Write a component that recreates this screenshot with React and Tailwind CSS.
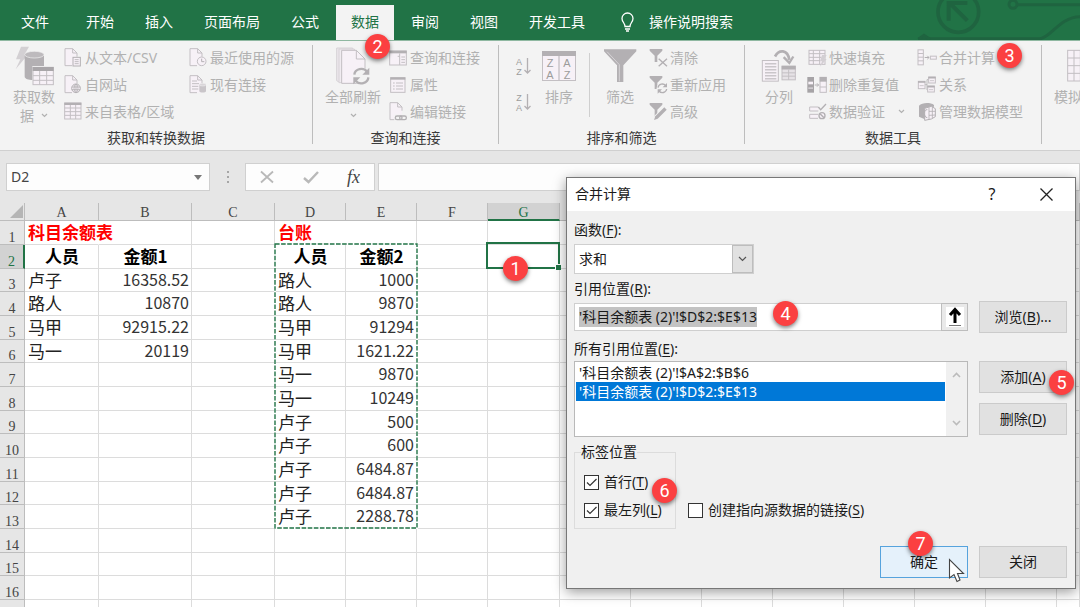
import { useEffect, useRef } from "react";

const UI_FONT = "font-['Noto_Sans','Noto_Sans_CJK_SC',sans-serif]";
const CELL_FONT = "font-['Noto_Sans_CJK_SC',sans-serif]";
const SERIF_FONT = "font-['Liberation_Serif',serif]";

const INK = "#b3b0b3";
const EDGE = "#c3bfc3";
const PAPER = "#f7f1f7";

/* ---------- icons ---------- */

function GetDataIcon() {
  return (
    <svg width="39" height="40" viewBox="45 140 117 120" aria-hidden="true">
      <path d="M63 142H87L75 163H86L47 210L61 180H48Z" fill="#d3d0d3" />
      <path d="M74 166V232C74 238 86 242 98 242H132V166Z" fill={INK} />
      <ellipse cx="103" cy="166" rx="29" ry="10" fill="#bdbabd" stroke="#f3f3f3" strokeWidth="2" />
      <rect x="97" y="200" width="65" height="60" fill="#f3f3f3" />
      <rect x="99" y="204" width="61" height="52" fill={PAPER} stroke={EDGE} strokeWidth="3" />
      <rect x="98" y="203" width="63" height="12" fill="#a9a6a9" />
      <path d="M119 215V256M140 215V256M99 229H160M99 243H160" stroke={EDGE} strokeWidth="3" />
    </svg>
  );
}

function DocIcon({ children }) {
  return (
    <svg width="18" height="19" viewBox="0 0 54 57" aria-hidden="true">
      <path d="M3 2H26L39 15V53H3Z" fill={PAPER} />
      <path d="M24 53H3V2H26L39 15V26M26 2V15H39" fill="none" stroke={EDGE} strokeWidth="3" />
      {children}
    </svg>
  );
}

function TextFileIcon() {
  return (
    <DocIcon>
      <rect x="27" y="28" width="22" height="26" fill={PAPER} stroke={INK} strokeWidth="3" />
      <path d="M32 35H44M32 41H44M32 47H44" stroke={INK} strokeWidth="2.5" />
    </DocIcon>
  );
}

function WebIcon() {
  return (
    <DocIcon>
      <circle cx="36" cy="40" r="13" fill={PAPER} stroke={INK} strokeWidth="3" />
      <ellipse cx="36" cy="40" rx="6" ry="12" fill="none" stroke={INK} strokeWidth="2.5" />
      <path d="M24 36H48M24 44H48M36 28V52" stroke={INK} strokeWidth="2.5" />
    </DocIcon>
  );
}

function TableIcon() {
  return (
    <svg width="18" height="19" viewBox="0 0 54 57" aria-hidden="true">
      <rect x="2" y="3" width="49" height="48" fill={PAPER} stroke={EDGE} strokeWidth="3" />
      <rect x="1" y="2" width="51" height="7" fill={INK} />
      <path d="M19 9V51M35 9V51M2 18H51M2 29H51M2 40H51" stroke={EDGE} strokeWidth="3" />
    </svg>
  );
}

function RecentIcon() {
  return (
    <DocIcon>
      <circle cx="38" cy="40" r="13" fill={PAPER} stroke={EDGE} strokeWidth="3" />
      <path d="M38 32V41H46" fill="none" stroke={INK} strokeWidth="3" />
    </DocIcon>
  );
}

function ConnectionsIcon() {
  return (
    <DocIcon>
      <path d="M9 18H24M9 26H30M9 34H28M9 42H28" stroke={EDGE} strokeWidth="3" />
      <path d="M31 29V49C31 54 51 54 51 49V29Z" fill="#c9c5c9" />
      <ellipse cx="41" cy="29" rx="10" ry="4" fill="#d9d5d9" stroke="#f3f3f3" strokeWidth="1.5" />
    </DocIcon>
  );
}

function RefreshAllIcon() {
  return (
    <svg width="36" height="40" viewBox="52 140 108 120" aria-hidden="true">
      <path d="M57 146H105V240L64 248L57 244Z" fill="#ebe6eb" stroke="#d6d2d6" strokeWidth="3" />
      <path d="M64 149H110L120 250H64Z" fill="#f0ebf0" stroke="#d6d2d6" strokeWidth="3" />
      <path d="M72 153H116L142 179V252H72Z" fill={PAPER} stroke={EDGE} strokeWidth="3" />
      <path d="M116 153V179H142" fill="none" stroke={EDGE} strokeWidth="3" />
      <circle cx="131" cy="230" r="26" fill="#f3f3f3" />
      <path d="M110 226A21 19 0 0 1 148 217M152 234A21 19 0 0 1 114 244" fill="none" stroke={INK} strokeWidth="7" />
      <path d="M155 205V226H134Z" fill={INK} />
      <path d="M107 255V234H128Z" fill={INK} />
    </svg>
  );
}

function QueriesIcon() {
  return (
    <svg width="18" height="18" viewBox="0 0 54 54" aria-hidden="true">
      <rect x="2" y="6" width="50" height="42" fill={PAPER} stroke={EDGE} strokeWidth="3" />
      <rect x="1" y="5" width="52" height="8" fill={INK} />
      <path d="M32 13V48M32 22H26M37 24H48M37 32H48M37 40H48" stroke={EDGE} strokeWidth="3" />
    </svg>
  );
}

function PropertiesIcon() {
  return (
    <svg width="18" height="18" viewBox="0 0 54 54" aria-hidden="true">
      <rect x="5" y="5" width="43" height="44" fill={PAPER} stroke={EDGE} strokeWidth="3" />
      <rect x="4" y="4" width="45" height="7" fill={INK} />
      <path d="M12 21H17M21 21H42M12 30H17M21 30H42M12 39H17M21 39H42" stroke={EDGE} strokeWidth="3" />
    </svg>
  );
}

function EditLinksIcon() {
  return (
    <DocIcon>
      <rect x="16" y="38" width="38" height="19" fill="#f3f3f3" />
      <rect x="19" y="42" width="20" height="11" rx="5" fill="none" stroke={INK} strokeWidth="4" />
      <rect x="32" y="42" width="20" height="11" rx="5" fill="none" stroke={INK} strokeWidth="4" />
    </DocIcon>
  );
}

function SortArrowIcon({ first, second }) {
  const letter = { textAnchor: "middle", fontSize: "9", fill: "#9c9c9c", fontFamily: "Liberation Sans, sans-serif" };
  return (
    <svg width="17" height="22" viewBox="0 0 17 22" aria-hidden="true">
      <text x="5" y="9" {...letter}>{first}</text>
      <text x="5" y="19" {...letter}>{second}</text>
      <path d="M13.5 2V17M10.5 14L13.5 17L16.5 14" fill="none" stroke={INK} strokeWidth="1.3" />
    </svg>
  );
}

function SortIcon() {
  const letter = { textAnchor: "middle", fontSize: "11", fill: "#9c9c9c", fontFamily: "Liberation Sans, sans-serif" };
  return (
    <svg width="34" height="32" viewBox="0 0 34 32" aria-hidden="true">
      <rect x="0.5" y="1.5" width="33" height="29" fill={PAPER} stroke={EDGE} />
      <rect x="0" y="1" width="34" height="5" fill={INK} />
      <path d="M17 6V30" stroke={EDGE} strokeWidth="1.3" />
      <text x="8" y="17" {...letter}>Z</text>
      <text x="8" y="29" {...letter}>A</text>
      <text x="25" y="17" {...letter}>A</text>
      <text x="25" y="29" {...letter}>Z</text>
    </svg>
  );
}

function FilterIcon() {
  return (
    <svg width="34" height="36" viewBox="848 147 102 108" aria-hidden="true">
      <path d="M851 151H948V157L909 199V249H890V199L851 157Z" fill={INK} />
      <path d="M860 158L897 197V247" fill="none" stroke="#d5d2d5" strokeWidth="3" />
    </svg>
  );
}

function SmallFunnel({ children }) {
  return (
    <svg width="19" height="19" viewBox="0 0 57 57" aria-hidden="true">
      <path d="M2 3H40V8L25 23V42H17V23L2 8Z" fill={INK} />
      {children}
    </svg>
  );
}

function ClearIcon() {
  return (
    <SmallFunnel>
      <path d="M29 32L54 55M54 32L29 55" stroke="#f3f3f3" strokeWidth="10" />
      <path d="M29 32L54 55M54 32L29 55" stroke={INK} strokeWidth="4" />
    </SmallFunnel>
  );
}

function ReapplyIcon() {
  return (
    <SmallFunnel>
      <circle cx="40" cy="40" r="17" fill="#f3f3f3" />
      <path d="M27 38A13 13 0 0 1 50 32M53 42A13 13 0 0 1 30 48" fill="none" stroke={INK} strokeWidth="4" />
      <path d="M54 24V37H41ZM26 56V43H39Z" fill={INK} />
    </SmallFunnel>
  );
}

function AdvancedIcon() {
  return (
    <SmallFunnel>
      <path d="M14 54L54 14" stroke="#f3f3f3" strokeWidth="14" />
      <path d="M15 54L19 43L46 16L53 23L26 50Z" fill={INK} />
    </SmallFunnel>
  );
}

function SplitIcon() {
  return (
    <svg width="36" height="36" viewBox="184 146 108 105" aria-hidden="true">
      <path d="M226 170C238 148 264 148 269 180" fill="none" stroke={INK} strokeWidth="8" />
      <path d="M252 172L269 189L281 170" fill="none" stroke={INK} strokeWidth="7" />
      <rect x="188" y="182" width="48" height="62" fill={PAPER} stroke={EDGE} strokeWidth="3" />
      <path d="M196 192H230M196 201H230M196 210H230M196 219H230M196 228H230M196 237H230" stroke={INK} strokeWidth="3" />
      <rect x="247" y="199" width="40" height="41" fill="#e6e2e6" stroke={EDGE} strokeWidth="3" />
      <rect x="246" y="198" width="42" height="11" fill={INK} />
      <path d="M267 209V240M247 219H287M247 229H287" stroke={EDGE} strokeWidth="3" />
    </svg>
  );
}

function FlashFillIcon() {
  return (
    <svg width="19" height="18" viewBox="0 0 57 54" aria-hidden="true">
      <rect x="3" y="4" width="48" height="42" fill={PAPER} stroke={EDGE} strokeWidth="3" />
      <path d="M3 14H51M3 25H40M3 35H36M16 4V46M35 4V46" stroke={EDGE} strokeWidth="3" />
      <path d="M42 18H56L49 30H56L36 53L42 37H36Z" fill="#d3cfd3" />
    </svg>
  );
}

function DedupeIcon() {
  return (
    <svg width="20" height="18" viewBox="0 0 60 54" aria-hidden="true">
      <rect x="1" y="3" width="20" height="47" fill="#a6a3a6" />
      <rect x="4" y="17" width="14" height="8" fill={PAPER} />
      <rect x="4" y="34" width="14" height="5" fill="#d0ccd0" />
      <path d="M23 27H34M30 22L35 27L30 32" fill="none" stroke={INK} strokeWidth="3" />
      <rect x="39" y="4" width="19" height="45" fill={PAPER} stroke={EDGE} strokeWidth="3" />
      <rect x="38" y="3" width="21" height="14" fill={INK} />
      <path d="M38 33H58" stroke={EDGE} strokeWidth="3" />
    </svg>
  );
}

function ValidationIcon() {
  return (
    <svg width="19" height="18" viewBox="0 0 57 54" aria-hidden="true">
      <path d="M30 12H5V24H31M30 34H5V46H30" fill={PAPER} stroke={EDGE} strokeWidth="3" />
      <path d="M31 12L38 20L54 3" fill="none" stroke={INK} strokeWidth="4" />
      <circle cx="42" cy="38" r="9" fill={PAPER} stroke={INK} strokeWidth="4" />
      <path d="M36 32L48 44" stroke={INK} strokeWidth="4" />
    </svg>
  );
}

function ConsolidateIcon() {
  return (
    <svg width="20" height="17" viewBox="0 0 60 50" aria-hidden="true">
      <rect x="3" y="2" width="16" height="45" fill={PAPER} stroke={EDGE} strokeWidth="3" />
      <path d="M3 13H19M3 24H19M3 35H19" stroke={EDGE} strokeWidth="3" />
      <path d="M23 25H36M31 20L36 25L31 30" fill="none" stroke={INK} strokeWidth="3" />
      <rect x="40" y="21" width="18" height="9" fill={PAPER} stroke={EDGE} strokeWidth="3" />
    </svg>
  );
}

function RelationsIcon() {
  return (
    <svg width="20" height="18" viewBox="0 0 60 54" aria-hidden="true">
      <path d="M24 26H30V11H34M30 26V42H34" fill="none" stroke={INK} strokeWidth="2.5" />
      <rect x="4" y="16" width="20" height="22" fill={PAPER} stroke={EDGE} strokeWidth="3" />
      <rect x="35" y="3" width="20" height="18" fill={PAPER} stroke={EDGE} strokeWidth="3" />
      <rect x="32" y="30" width="20" height="18" fill={PAPER} stroke={EDGE} strokeWidth="3" />
      <path d="M3 18H25M34 5H56M31 32H53" stroke={INK} strokeWidth="5" />
      <path d="M8 29H20M36 41H48M39 14H51" stroke={EDGE} strokeWidth="2.5" />
    </svg>
  );
}

function DataModelIcon() {
  return (
    <svg width="19" height="19" viewBox="0 0 57 57" aria-hidden="true">
      <path d="M3 11C12 1 38 1 48 9V14L24 18V53L3 44Z" fill={INK} />
      <path d="M20 19L40 13L52 20V44L40 51L20 55Z" fill={PAPER} stroke={INK} strokeWidth="3" />
      <path d="M33 16V53M43 15V49M33 28L52 28M33 40L52 39" stroke={INK} strokeWidth="2.5" />
      <path d="M28 23C19 22 22 30 16 34C22 37 19 47 28 47" fill="none" stroke={INK} strokeWidth="3" />
    </svg>
  );
}

function WhatIfIcon() {
  return (
    <svg width="30" height="34" viewBox="0 0 90 102" aria-hidden="true">
      <rect x="2" y="4" width="78" height="92" fill={PAPER} stroke={EDGE} strokeWidth="3" />
      <path d="M21 4V96M40 4V96M60 4V96M2 27H80M2 50H80M2 73H80" stroke={EDGE} strokeWidth="3" />
    </svg>
  );
}

function Chevron({ className = "" }) {
  return (
    <svg className={className} width="7" height="5" viewBox="0 0 7 5" aria-hidden="true">
      <path d="M1 1L3.5 3.5L6 1" fill="none" stroke="currentColor" strokeWidth="1.2" />
    </svg>
  );
}

/* ---------- title tabs ---------- */

const TABS = ["开始", "插入", "页面布局", "公式", "数据", "审阅", "视图", "开发工具"];

function TabBar() {
  return (
    <header className="relative flex h-[41px] shrink-0 items-end overflow-hidden border-b border-[#8fb8a1] bg-[#217346] text-sm text-white">
      <svg className="absolute top-0 right-0" width="165" height="40" viewBox="645 0 495 120" aria-hidden="true">
        <g fill="none" stroke="#1f6440" strokeWidth="9">
          <circle cx="775" cy="36" r="61" strokeWidth="11" />
          <path d="M802 62L750 10M746 62V9H802" strokeWidth="12" />
          <circle cx="939" cy="13" r="12" />
          <path d="M951 14H1140M655 116H1020C1050 116 1080 50 1140 50" />
          <path d="M655 118L672 106L690 118" />
        </g>
      </svg>
      <nav className="relative flex gap-[3px]">
        <button className="h-[35px] pr-5 pb-px pl-[21px] whitespace-nowrap">文件</button>
        {TABS.map((tab) => (
          <button
            key={tab}
            className={
              tab === "数据"
                ? "h-[35px] bg-[#f3f3f3] px-[15px] pb-px whitespace-nowrap text-[#217346]"
                : "h-[35px] px-[14px] pb-px whitespace-nowrap"
            }
          >
            {tab}
          </button>
        ))}
      </nav>
      <button className="relative ml-[22px] flex h-[35px] items-center gap-[15px] pb-px whitespace-nowrap">
        <svg width="13" height="20" viewBox="0 0 13 20" aria-hidden="true">
          <path
            d="M4 14.5C4 11 1 10 1 6.5A5.5 5.5 0 0 1 12 6.5C12 10 9 11 9 14.5ZM4 17H9M5 19H8"
            fill="none"
            stroke="#fff"
            strokeWidth="1.3"
          />
        </svg>
        操作说明搜索
      </button>
    </header>
  );
}

/* ---------- ribbon ---------- */

function SmallItem({ icon, label, chevron }) {
  return (
    <button disabled className="flex h-[27px] items-center gap-[2px] whitespace-nowrap">
      <span className="flex w-5 shrink-0 justify-center">{icon}</span>
      {label}
      {chevron && <Chevron className="ml-[11px]" />}
    </button>
  );
}

function BigItem({ icon, lines, chevron, width }) {
  return (
    <button disabled className={`flex shrink-0 flex-col items-center leading-[19px] whitespace-nowrap ${width}`}>
      <span className="flex h-[43px] items-center justify-center pt-px">{icon}</span>
      {lines.map((line, i) => (
        <span key={i} className="flex h-[19px] items-center gap-[7px]">
          {line}
          {chevron && i === lines.length - 1 && <Chevron />}
        </span>
      ))}
    </button>
  );
}

function Group({ caption, width, inset, children }) {
  return (
    <section className={`flex shrink-0 flex-col justify-between pt-[3px] ${width}`}>
      <div className={`flex h-[82px] items-start text-[#b1b1b1] ${inset}`}>{children}</div>
      <h2 className="h-6 text-center leading-6 text-[#3b3b3b]">{caption}</h2>
    </section>
  );
}

function Divider() {
  return <div className="mt-1 mb-[6px] w-px shrink-0 bg-[#bdbdbd]" />;
}

function Ribbon() {
  return (
    <div className="flex h-[110px] shrink-0 overflow-hidden border-b border-[#d0d0d0] bg-[#f3f3f3] text-sm">
      <Group caption="获取和转换数据" width="w-[312px]" inset="pl-[6px]">
        <BigItem icon={<GetDataIcon />} lines={["获取数", "据"]} chevron width="w-14" />
        <div className="flex w-[126px] flex-col pl-px">
          <SmallItem icon={<TextFileIcon />} label="从文本/CSV" />
          <SmallItem icon={<WebIcon />} label="自网站" />
          <SmallItem icon={<TableIcon />} label="来自表格/区域" />
        </div>
        <div className="flex flex-col">
          <SmallItem icon={<RecentIcon />} label="最近使用的源" />
          <SmallItem icon={<ConnectionsIcon />} label="现有连接" />
        </div>
      </Group>
      <Divider />
      <Group caption="查询和连接" width="w-[185px]" inset="pl-2">
        <BigItem icon={<RefreshAllIcon />} lines={["全部刷新", ""]} chevron width="w-16" />
        <div className="flex flex-col pl-[3px]">
          <SmallItem icon={<QueriesIcon />} label="查询和连接" />
          <SmallItem icon={<PropertiesIcon />} label="属性" />
          <SmallItem icon={<EditLinksIcon />} label="编辑链接" />
        </div>
      </Group>
      <Divider />
      <Group caption="排序和筛选" width="w-[245px]" inset="pl-[11px]">
        <div className="flex w-6 flex-col items-center gap-[14px] pt-3">
          <button disabled aria-label="升序">
            <SortArrowIcon first="A" second="Z" />
          </button>
          <button disabled aria-label="降序">
            <SortArrowIcon first="Z" second="A" />
          </button>
        </div>
        <BigItem icon={<SortIcon />} lines={["排序"]} width="w-[50px]" />
        <div className="mx-[5px] mt-[9px] h-16 w-px bg-[#cfcfcf]" />
        <BigItem icon={<FilterIcon />} lines={["筛选"]} width="w-[50px]" />
        <div className="flex flex-col pl-[3px]">
          <SmallItem icon={<ClearIcon />} label="清除" />
          <SmallItem icon={<ReapplyIcon />} label="重新应用" />
          <SmallItem icon={<AdvancedIcon />} label="高级" />
        </div>
      </Group>
      <Divider />
      <Group caption="数据工具" width="w-[296px]" inset="pl-[6px]">
        <BigItem icon={<SplitIcon />} lines={["分列"]} width="w-14" />
        <div className="flex w-[110px] flex-col">
          <SmallItem icon={<FlashFillIcon />} label="快速填充" />
          <SmallItem icon={<DedupeIcon />} label="删除重复值" />
          <SmallItem icon={<ValidationIcon />} label="数据验证" chevron />
        </div>
        <div className="flex flex-col">
          <SmallItem icon={<ConsolidateIcon />} label="合并计算" />
          <SmallItem icon={<RelationsIcon />} label="关系" />
          <SmallItem icon={<DataModelIcon />} label="管理数据模型" />
        </div>
      </Group>
      <Divider />
      <Group caption="" width="" inset="pl-3">
        <BigItem icon={<WhatIfIcon />} lines={["模拟分析"]} width="w-14" />
      </Group>
    </div>
  );
}

/* ---------- formula bar ---------- */

function FormulaBar() {
  return (
    <div className="flex h-[52px] shrink-0 items-start bg-[#e6e6e6] pt-3 pl-[6px]">
      <div className="flex h-7 w-[204px] shrink-0 items-center border border-[#d0d0d0] bg-[#fdfdfd] pr-[3px]">
        <input
          aria-label="名称框"
          defaultValue="D2"
          className="min-w-0 flex-1 bg-transparent pl-1 text-sm text-[#444] outline-none"
        />
        <button aria-label="名称列表" className="flex h-full w-4 items-center justify-center">
          <svg width="8" height="5" viewBox="0 0 8 5" aria-hidden="true">
            <path d="M0 0H8L4 5Z" fill="#777" />
          </svg>
        </button>
      </div>
      <div className="flex h-7 w-[35px] shrink-0 flex-col items-center justify-center gap-[3px]">
        <span className="size-[2px] bg-[#a6a6a6]" />
        <span className="size-[2px] bg-[#a6a6a6]" />
        <span className="size-[2px] bg-[#a6a6a6]" />
      </div>
      <div className="flex h-7 w-[130px] shrink-0 items-center justify-between border border-[#d0d0d0] bg-[#fdfdfd] pr-[14px] pl-[14px]">
        <button aria-label="取消">
          <svg width="14" height="14" viewBox="0 0 14 14" aria-hidden="true">
            <path d="M1 1.5L13 12.5M13 1.5L1 12.5" stroke="#b9b9b9" strokeWidth="1.8" />
          </svg>
        </button>
        <button aria-label="输入">
          <svg width="16" height="13" viewBox="0 0 16 13" aria-hidden="true">
            <path d="M1 7L5.5 11L15 1" fill="none" stroke="#b9b9b9" strokeWidth="2.4" />
          </svg>
        </button>
        <button aria-label="插入函数" className={`text-lg leading-6 text-[#444] italic ${SERIF_FONT}`}>
          fx
        </button>
      </div>
      <input aria-label="编辑栏" className="ml-[3px] h-7 min-w-0 flex-1 border border-[#d0d0d0] bg-[#fdfdfd] px-1 outline-none" />
    </div>
  );
}

/* ---------- sheet ---------- */

const LETTERS = ["A", "B", "C", "D", "E", "F", "G", "H", "I", "J", "K", "L", "M", "N", "O"];

const ROWS = [
  { A: "科目余额表", D: "台账" },
  { A: "人员", B: "金额1", D: "人员", E: "金额2" },
  { A: "卢子", B: "16358.52", D: "路人", E: "1000" },
  { A: "路人", B: "10870", D: "路人", E: "9870" },
  { A: "马甲", B: "92915.22", D: "马甲", E: "91294" },
  { A: "马一", B: "20119", D: "马甲", E: "1621.22" },
  { D: "马一", E: "9870" },
  { D: "马一", E: "10249" },
  { D: "卢子", E: "500" },
  { D: "卢子", E: "600" },
  { D: "卢子", E: "6484.87" },
  { D: "卢子", E: "6484.87" },
  { D: "卢子", E: "2288.78" },
  {},
  {},
  {},
  {},
];

function cellStyle(rowIndex, col) {
  if (rowIndex === 0) return "text-left text-[17px] font-bold text-[#f00]";
  if (rowIndex === 1) return "text-center text-[17px] font-bold text-black";
  if (col === "B" || col === "E") return "text-right text-base text-[#333]";
  return "text-left text-[17px] text-[#222]";
}

function Sheet() {
  return (
    <main className="relative flex-1 overflow-hidden bg-white">
      <table className="w-full table-fixed border-separate border-spacing-0">
        <colgroup>
          <col className="w-[25px]" />
          <col className="w-[74px]" />
          <col className="w-[93px]" />
          <col className="w-[83px]" />
          <col className="w-[71px]" />
          <col className="w-[71px]" />
          <col className="w-[71px]" />
          <col className="w-[72px]" />
          <col className="w-[71px]" />
          <col className="w-[71px]" />
          <col className="w-[71px]" />
          <col className="w-[71px]" />
          <col className="w-[71px]" />
          <col className="w-[71px]" />
          <col className="w-[71px]" />
          <col />
        </colgroup>
        <thead>
          <tr className={`h-[18px] text-sm ${SERIF_FONT}`}>
            <th className="border-r border-b border-[#bdbdbd] bg-[#e6e6e6] p-0">
              <svg className="mr-px ml-auto" width="13" height="13" viewBox="0 0 13 13" aria-hidden="true">
                <path d="M13 0V13H0Z" fill="#b5b5b5" />
              </svg>
            </th>
            {LETTERS.map((letter) => (
              <th
                key={letter}
                className={
                  letter === "G"
                    ? "border-r border-b-2 border-r-[#bdbdbd] border-b-[#217346] bg-[#d2d2d2] p-0 align-bottom leading-[13px] font-normal text-[#217346]"
                    : "border-r border-b border-[#bdbdbd] bg-[#e6e6e6] p-0 align-bottom leading-[14px] font-normal text-[#444]"
                }
              >
                {letter}
              </th>
            ))}
          </tr>
        </thead>
        <tbody>
          {ROWS.map((row, i) => (
            <tr key={i} className="h-[24px] nth-[3n]:h-[23px]">
              <th
                className={
                  i === 1
                    ? `border-r-2 border-b border-r-[#217346] border-b-[#bdbdbd] bg-[#d2d2d2] p-0 align-bottom text-sm leading-[13px] font-normal text-[#217346] ${SERIF_FONT}`
                    : `border-r border-b border-[#bdbdbd] bg-[#e6e6e6] p-0 align-bottom text-sm leading-[13px] font-normal text-[#444] ${SERIF_FONT}`
                }
              >
                {i + 1}
              </th>
              {LETTERS.map((col) => (
                <td
                  key={col}
                  className={`border-r border-b border-[#dcdcdc] py-0 pr-[2px] pl-[3px] align-top leading-[21px] whitespace-nowrap ${CELL_FONT} ${
                    i === 0 && row[col] ? "border-r-transparent" : ""
                  } ${cellStyle(i, col)}`}
                >
                  {row[col]}
                </td>
              ))}
            </tr>
          ))}
        </tbody>
      </table>

      <svg className="absolute top-[40px] left-[274px]" width="144" height="286" viewBox="0 0 144 286" aria-hidden="true">
        <rect x="1" y="1" width="142" height="284" fill="none" stroke="#fff" strokeWidth="2" />
        <rect x="1" y="1" width="142" height="284" fill="none" stroke="#217346" strokeWidth="1.4" strokeDasharray="4.6 1.5" />
      </svg>
      <div className="absolute top-[39px] left-[486px] h-[27px] w-[74px] border-2 border-[#217346]">
        <span className="absolute -right-[3px] -bottom-[3px] size-[6px] border-t border-l border-white bg-[#217346]" />
      </div>
    </main>
  );
}

/* ---------- dialog ---------- */

function Key({ children }) {
  return (
    <>
      (<span className="underline underline-offset-2">{children}</span>)
    </>
  );
}

function DialogButton({ children, primary }) {
  return (
    <button
      type="button"
      className={
        primary
          ? "h-8 w-[88px] shrink-0 border border-[#56a3dd] bg-[#e5f1fb]"
          : "h-8 w-[88px] shrink-0 border border-[#cbcbcb] bg-[#e1e1e1]"
      }
    >
      {children}
    </button>
  );
}

function Check({ children, checked, className = "" }) {
  return (
    <label className={`flex h-7 items-center gap-[5px] whitespace-nowrap ${className}`}>
      <span className="grid size-[15px] shrink-0">
        <input
          type="checkbox"
          defaultChecked={checked}
          className="peer col-start-1 row-start-1 size-[15px] appearance-none border border-[#333] bg-white"
        />
        <svg
          className="pointer-events-none invisible col-start-1 row-start-1 peer-checked:visible"
          width="15"
          height="15"
          viewBox="0 0 15 15"
          aria-hidden="true"
        >
          <path d="M3 7.5L6 10.5L12.5 4" fill="none" stroke="#333" strokeWidth="1.2" />
        </svg>
      </span>
      <span>{children}</span>
    </label>
  );
}

function ConsolidateDialog() {
  const refField = useRef(null);

  useEffect(() => {
    refField.current.focus();
    refField.current.select();
  }, []);

  return (
    <div
      role="dialog"
      aria-labelledby="dialog-title"
      className="absolute top-[177px] right-1 w-[510px] border border-[#777] bg-[#f0f0f0] text-sm leading-5 text-[#1a1a1a] shadow-[0_3px_12px_rgba(0,0,0,0.4)]"
    >
      <div className="flex h-[33px] items-center bg-white pr-[22px] pb-px pl-2">
        <h1 id="dialog-title" className="flex-1">合并计算</h1>
        <button type="button" aria-label="帮助" className="w-10 text-base">?</button>
        <button type="button" aria-label="关闭窗口" className="ml-7">
          <svg width="13" height="13" viewBox="0 0 13 13" aria-hidden="true">
            <path d="M0.5 0.5L12.5 12.5M12.5 0.5L0.5 12.5" stroke="#222" strokeWidth="1.3" />
          </svg>
        </button>
      </div>

      <form className="flex flex-col pt-[9px] pr-2 pb-[10px] pl-[7px]">
        <label htmlFor="fn">函数<Key>F</Key>:</label>
        <div className="mt-1 grid w-[180px]">
          <select
            id="fn"
            className="col-start-1 row-start-1 h-[30px] appearance-none border border-[#cfcfcf] bg-white pl-1 outline-none"
          >
            <option>求和</option>
          </select>
          <span className="pointer-events-none col-start-1 row-start-1 m-px flex w-[21px] items-center justify-center justify-self-end border border-[#bdbdbd] bg-[#e1e1e1] text-[#555]">
            <svg width="9" height="6" viewBox="0 0 9 6" aria-hidden="true">
              <path d="M1 1L4.5 4.5L8 1" fill="none" stroke="currentColor" strokeWidth="1.2" />
            </svg>
          </span>
        </div>

        <label htmlFor="ref" className="mt-[5px]">引用位置<Key>R</Key>:</label>
        <div className="mt-[2px] flex items-center gap-[11px]">
          <div className="flex h-7 min-w-0 flex-1 border border-[#cfcfcf] bg-white">
            <input
              id="ref"
              ref={refField}
              defaultValue="'科目余额表 (2)'!$D$2:$E$13"
              className="my-[3px] min-w-0 flex-1 bg-transparent pl-1 text-[#1a1a1a] outline-none selection:bg-[#c3c3c3] selection:text-[#1a1a1a]"
            />
            <button
              type="button"
              aria-label="折叠对话框"
              className="-my-px -mr-px flex w-[27px] items-center justify-center border border-[#bdbdbd] bg-[#e9e9e9]"
            >
              <svg className="bg-white" width="18" height="20" viewBox="0 0 18 20" aria-hidden="true">
                <path d="M9 16V3M4 8L9 2.5L14 8" fill="none" stroke="#000" strokeWidth="3" />
                <path d="M3 18.5H15" stroke="#777" strokeWidth="1" />
              </svg>
            </button>
          </div>
          <DialogButton>浏览<Key>B</Key>...</DialogButton>
        </div>

        <span id="refs-label" className="mt-[6px]">所有引用位置<Key>E</Key>:</span>
        <div className="mt-[2px] flex gap-[11px]">
          <div className="flex h-[76px] min-w-0 flex-1 border border-[#b9b9b9] bg-white">
            <ul role="listbox" aria-labelledby="refs-label" className="min-w-0 flex-1 px-px pt-[2px]">
              <li role="option" aria-selected="false" className="h-[18px] pl-[3px] leading-[18px]">
                '科目余额表 (2)'!$A$2:$B$6
              </li>
              <li role="option" aria-selected="true" className="h-[19px] bg-[#0078d7] pl-[3px] leading-[19px] text-white">
                '科目余额表 (2)'!$D$2:$E$13
              </li>
            </ul>
            <div className="flex w-[21px] flex-col items-center justify-between bg-[#f0f0f0] py-[10px]">
              <svg width="9" height="6" viewBox="0 0 9 6" aria-hidden="true">
                <path d="M1 5L4.5 1.5L8 5" fill="none" stroke="#bbb" strokeWidth="1.6" />
              </svg>
              <svg width="9" height="6" viewBox="0 0 9 6" aria-hidden="true">
                <path d="M1 1L4.5 4.5L8 1" fill="none" stroke="#bbb" strokeWidth="1.6" />
              </svg>
            </div>
          </div>
          <div className="flex flex-col gap-[10px]">
            <DialogButton>添加<Key>A</Key></DialogButton>
            <DialogButton>删除<Key>D</Key></DialogButton>
          </div>
        </div>

        <div className="mt-[5px] flex items-end gap-3">
          <fieldset className="w-[102px] border border-[#dcdcdc] pt-[6px] pb-1 pl-[9px]">
            <legend className="-ml-[3px]">标签位置</legend>
            <Check checked>首行<Key>T</Key></Check>
            <Check checked>最左列<Key>L</Key></Check>
          </fieldset>
          <Check className="mb-[5px]">创建指向源数据的链接<Key>S</Key></Check>
        </div>

        <div className="mt-[17px] flex justify-end gap-[11px]">
          <DialogButton primary>确定</DialogButton>
          <DialogButton>关闭</DialogButton>
        </div>
      </form>
    </div>
  );
}

/* ---------- step badges ---------- */

const STEPS = [
  { n: 1, place: "left-[503px] top-[256px]" },
  { n: 2, place: "left-[365px] top-[34px]" },
  { n: 3, place: "left-[997px] top-[43px]" },
  { n: 4, place: "left-[773px] top-[301px]" },
  { n: 5, place: "left-[1049px] top-[370px]" },
  { n: 6, place: "left-[652px] top-[478px]" },
  { n: 7, place: "left-[908px] top-[531px]" },
];

export default function App() {
  return (
    <div className={`relative flex h-screen flex-col overflow-hidden bg-white ${UI_FONT}`}>
      <TabBar />
      <Ribbon />
      <FormulaBar />
      <Sheet />
      <ConsolidateDialog />
      {STEPS.map(({ n, place }) => (
        <span
          key={n}
          className={`absolute flex size-[25px] items-center justify-center rounded-full bg-[#fb4041] font-['Roboto',sans-serif] text-lg leading-none text-white shadow-[0_2px_4px_rgba(0,0,0,0.5)] ${place}`}
        >
          {n}
        </span>
      ))}
      <svg className="absolute top-[558px] left-[948px]" width="18" height="26" viewBox="0 0 18 26" aria-hidden="true">
        <path d="M1.5 1.5V20L6 16.5L9 23.5L12 22L9.5 15.5H15.5Z" fill="#fff" stroke="#444" strokeWidth="1.1" />
      </svg>
    </div>
  );
}
